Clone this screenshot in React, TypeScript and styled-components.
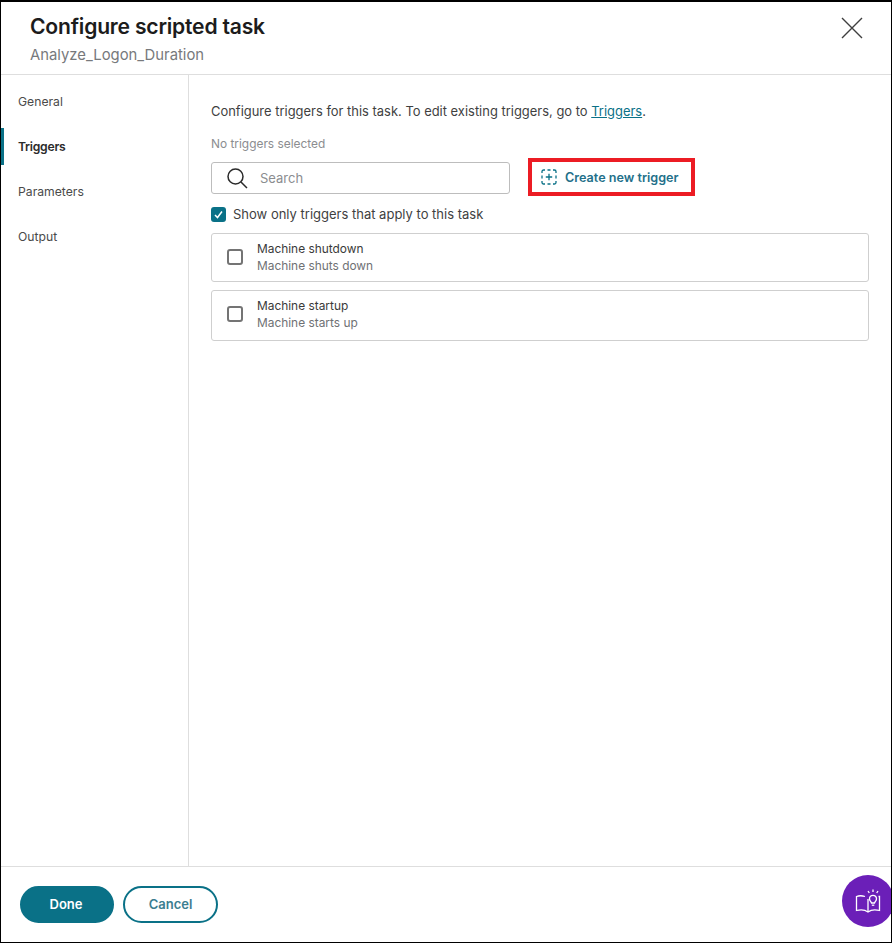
import React from "react";
import styled, { createGlobalStyle } from "styled-components";

const Global = createGlobalStyle`
  html, body { margin: 0; padding: 0; background: #fff; }
  body { font-family: Inter, "Liberation Sans", sans-serif; color: #2b2b2b; }
  * { box-sizing: border-box; }
`;

const Frame = styled.div`
  position: relative;
  width: 892px;
  height: 943px;
  border: 1px solid #000;
  border-top-width: 2px;
  background: #fff;
  display: flex;
  flex-direction: column;
  overflow: hidden;
`;

const Header = styled.header`
  height: 73px;
  flex: none;
  border-bottom: 1px solid #dedede;
  padding: 12px 29px 0;
  display: flex;
  justify-content: space-between;
`;

const Title = styled.h1`
  margin: 0;
  font-size: 21.1px;
  line-height: 26px;
  font-weight: 600;
  letter-spacing: -0.2px;
  color: #1c1c1c;
`;

const Subtitle = styled.div`
  margin-top: 6px;
  font-size: 14.85px;
  line-height: 18px;
  color: #77797c;
`;

const CloseButton = styled.button`
  border: 0;
  background: none;
  padding: 0;
  width: 24px;
  height: 24px;
  margin: 2px -2px 0 0;
  color: #3f3f3f;
  display: flex;
`;

const Body = styled.div`
  flex: 1;
  display: flex;
  min-height: 0;
`;

const Side = styled.nav`
  width: 188px;
  flex: none;
  border-right: 1px solid #dedede;
  padding-top: 8px;
`;

const NavItem = styled.div<{ $active?: boolean }>`
  height: 37px;
  margin-bottom: 8px;
  padding-left: ${p => (p.$active ? 14 : 17)}px;
  border-left: ${p => (p.$active ? "3px solid #0a7187" : "0")};
  display: flex;
  align-items: center;
  font-size: 12.2px;
  font-weight: ${p => (p.$active ? 600 : 400)};
  letter-spacing: ${p => (p.$active ? "-0.25px" : "0")};
  color: ${p => (p.$active ? "#2b2b2b" : "#4a4a4a")};
`;

const Main = styled.main`
  flex: 1;
  padding: 28px 22px 0 22px;
`;

const Intro = styled.p`
  margin: 0;
  font-size: 12.95px;
  line-height: 16px;
  color: #3f3f3f;
`;

const Anchor = styled.a`
  color: #0a7187;
  text-decoration: underline;
`;

const Selected = styled.div`
  margin-top: 17px;
  font-size: 11.9px;
  line-height: 16px;
  color: #8b8d90;
`;

const SearchRow = styled.div`
  margin-top: 6px;
  display: flex;
  align-items: center;
  gap: 18px;
`;

const SearchBox = styled.div`
  width: 299px;
  height: 32px;
  border: 1px solid #bdbdbd;
  border-radius: 3px;
  display: flex;
  align-items: center;
  padding-left: 14px;
  gap: 12px;
  color: #2b2b2b;
`;

const SearchText = styled.span`
  font-size: 13px;
  color: #8b8d90;
`;

const Highlight = styled.div`
  width: 167px;
  height: 38px;
  margin-bottom: 2px;
  border: 4px solid #ec1c24;
  display: flex;
  align-items: center;
  padding-left: 9px;
  gap: 8px;
  color: #0a7187;
`;

const CreateText = styled.span`
  font-size: 12.6px;
  font-weight: 600;
  color: #23708a;
`;

const FilterRow = styled.label`
  margin-top: 8px;
  display: flex;
  align-items: center;
  gap: 7px;
  font-size: 13px;
  line-height: 16px;
  color: #3f3f3f;
`;

const CheckedBox = styled.span`
  width: 15px;
  height: 15px;
  border-radius: 3px;
  background: #0a7187;
  display: flex;
  align-items: center;
  justify-content: center;
`;

const List = styled.div`
  margin-top: 11px;
  display: flex;
  flex-direction: column;
  gap: 8px;
`;

const Card = styled.div<{ $h: number }>`
  height: ${p => p.$h}px;
  border: 1px solid #cfcfcf;
  border-radius: 3px;
  display: flex;
  align-items: flex-start;
  padding: 6px 0 0 15px;
  gap: 14px;
`;

const EmptyBox = styled.span`
  width: 16px;
  height: 16px;
  margin-top: 9px;
  border: 2px solid #747474;
  border-radius: 3px;
  flex: none;
`;

const CardName = styled.div`
  font-size: 11.9px;
  line-height: 17px;
  color: #3a3a3a;
`;

const CardDesc = styled.div`
  font-size: 11.9px;
  line-height: 17px;
  color: #6f7174;
`;

const Footer = styled.footer`
  height: 76px;
  flex: none;
  border-top: 1px solid #dedede;
  padding: 19px 0 0 19px;
  display: flex;
  align-items: flex-start;
  gap: 9px;
`;

const Button = styled.button<{ $primary?: boolean }>`
  width: ${p => (p.$primary ? 94 : 95)}px;
  height: 37px;
  border-radius: 19px;
  border: 2px solid #0a7187;
  background: ${p => (p.$primary ? "#0a7187" : "#fff")};
  color: ${p => (p.$primary ? "#fff" : "#3b7d90")};
  font: 600 13px Inter, "Liberation Sans", sans-serif;
  padding: 0 ${p => (p.$primary ? 2 : 0)}px 2px 0;
`;

const HelpBubble = styled.div`
  position: absolute;
  left: 841px;
  top: 873px;
  width: 52px;
  height: 52px;
  border-radius: 50%;
  padding-left: 1px;
  background: #6b1fb8;
  display: flex;
  align-items: center;
  justify-content: center;
`;

const Plus = () => (
  <svg width="16" height="16" viewBox="0 0 16 16" fill="none" stroke="currentColor" strokeWidth="1.3">
    <path d="M1 4V2.5A1.5 1.5 0 0 1 2.5 1H4M6.5 1h3M12 1h1.5A1.5 1.5 0 0 1 15 2.5V4M15 6.5v3M15 12v1.5a1.5 1.5 0 0 1-1.5 1.5H12M9.5 15h-3M4 15H2.500A1.5 1.5 0 0 1 1 13.500V12M1 9.500v-3" />
    <path d="M8 4.800v6.400M4.800 8h6.400" />
  </svg>
);

export default function App() {
  return (
    <>
      <Global />
      <Frame>
        <Header>
          <div>
            <Title>Configure scripted task</Title>
            <Subtitle>Analyze_Logon_Duration</Subtitle>
          </div>
          <CloseButton aria-label="Close">
            <svg width="24" height="24" viewBox="0 0 24 24" fill="none" stroke="currentColor" strokeWidth="1.4">
              <path d="M2 2l20 20M22 2L2 22" />
            </svg>
          </CloseButton>
        </Header>
        <Body>
          <Side>
            <NavItem>General</NavItem>
            <NavItem $active>Triggers</NavItem>
            <NavItem>Parameters</NavItem>
            <NavItem>Output</NavItem>
          </Side>
          <Main>
            <Intro>
              Configure triggers for this task. To edit existing triggers, go to <Anchor>Triggers</Anchor>.
            </Intro>
            <Selected>No triggers selected</Selected>
            <SearchRow>
              <SearchBox>
                <svg width="22" height="22" viewBox="0 0 22 22" fill="none" stroke="currentColor" strokeWidth="1.5">
                  <circle cx="9.500" cy="9.500" r="7.500" />
                  <path d="M15 15l6 6" />
                </svg>
                <SearchText>Search</SearchText>
              </SearchBox>
              <Highlight>
                <Plus />
                <CreateText>Create new trigger</CreateText>
              </Highlight>
            </SearchRow>
            <FilterRow>
              <CheckedBox>
                <svg width="11" height="11" viewBox="0 0 11 11" fill="none" stroke="#fff" strokeWidth="1.500">
                  <path d="M2 6l2.500 2.500L9 2.500" />
                </svg>
              </CheckedBox>
              Show only triggers that apply to this task
            </FilterRow>
            <List>
              <Card $h={49}>
                <EmptyBox />
                <div>
                  <CardName>Machine shutdown</CardName>
                  <CardDesc>Machine shuts down</CardDesc>
                </div>
              </Card>
              <Card $h={51}>
                <EmptyBox />
                <div>
                  <CardName>Machine startup</CardName>
                  <CardDesc>Machine starts up</CardDesc>
                </div>
              </Card>
            </List>
          </Main>
        </Body>
        <Footer>
          <Button $primary>Done</Button>
          <Button>Cancel</Button>
        </Footer>
        <HelpBubble>
          <svg width="27" height="25" viewBox="0 0 27 25" fill="none" stroke="#fff" strokeWidth="1.300">
            <path d="M10 7.500C7 6.500 4 6.500 1.500 7.500V21.500c3.500-1 8.500-.8 11.500 1.500 3-2.300 8-2.500 11.500-1.500V7.500h-1" />
            <path d="M13 10v13" />
            <path d="M16.500 14c-.3-1.200-2-2-2-4.200a3.500 3.500 0 1 1 7 0c0 2.200-1.700 3-2 4.200z" />
            <path d="M16.800 16.200h2.500" />
            <path d="M13 2l1.300 2M18 .5v2.500M23 2l-1.300 2" />
          </svg>
        </HelpBubble>
      </Frame>
    </>
  );
}
